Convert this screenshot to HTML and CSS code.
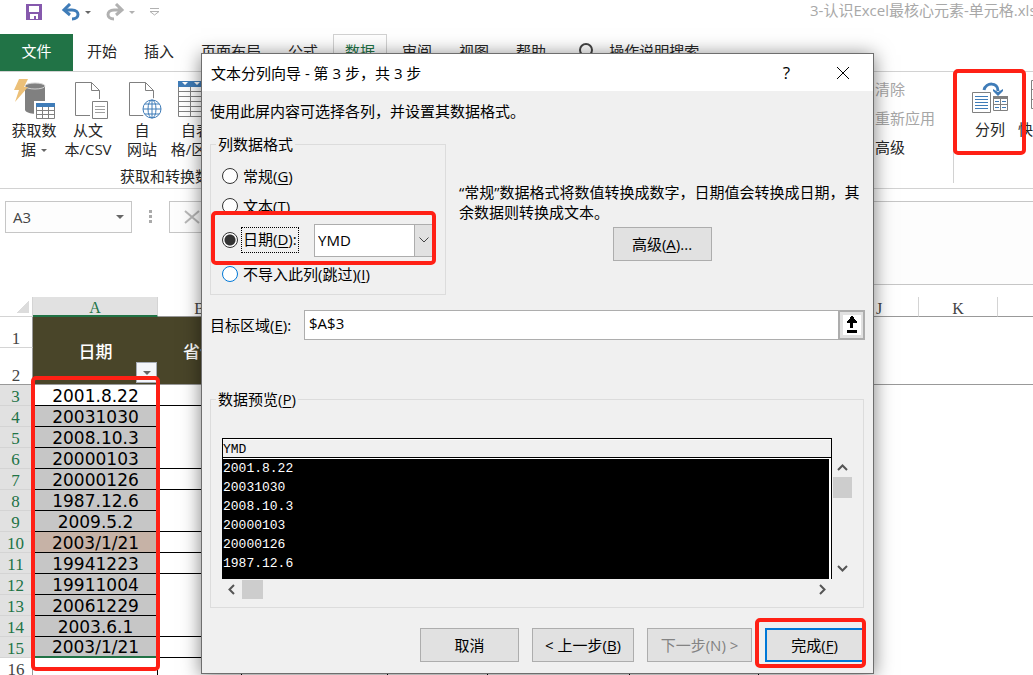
FILE: index.html
```html
<!DOCTYPE html>
<html lang="zh-CN">
<head>
    <meta charset="UTF-8">
    <meta name="viewport" content="width=device-width, initial-scale=1.0">
    <title>3-认识Excel最核心元素-单元格</title>
    <link rel="stylesheet" href="styles.css">
</head>
<body>
    <div class="excel">
        <header class="title-bar">
            <div class="quick-access">
                <button class="icon-btn" aria-label="保存">
                    <svg width="18" height="18" viewBox="0 0 18 18"><path fill="#8659ad" d="M1 1h16v16H1z"/><path fill="#fff" d="M4 3h10v6H4zM5 11h8v5h-2v-3H9v3H5z"/></svg>
                </button>
                <button class="icon-btn undo" aria-label="撤消">
                    <svg width="20" height="18" viewBox="0 0 20 18"><path fill="none" stroke="#3f7cb8" stroke-width="3" d="M3 7h8c8 0 8 9 0 9"/><path fill="none" stroke="#3f7cb8" stroke-width="3" d="M9 1L3 7l6 5"/></svg>
                    <span class="caret"></span>
                </button>
                <button class="icon-btn redo" aria-label="恢复">
                    <svg width="20" height="18" viewBox="0 0 20 18"><path fill="none" stroke="#b1b1b1" stroke-width="3" d="M17 7H9c-8 0-8 9 0 9M11 1l6 6-6 5"/></svg>
                    <span class="caret light"></span>
                </button>
                <button class="icon-btn" aria-label="自定义快速访问工具栏">
                    <svg width="11" height="8" viewBox="0 0 11 8"><path fill="none" stroke="#b1b1b1" d="M1 .5h9M1 3.500h9L5.500 7z"/></svg>
                </button>
            </div>
            <div class="doc-name">3-认识Excel最核心元素-单元格.xlsx</div>
        </header>

        <nav class="tabs">
            <a href="#" class="file-tab">文件</a>
            <a href="#">开始</a>
            <a href="#">插入</a>
            <a href="#">页面布局</a>
            <a href="#">公式</a>
            <a href="#" class="active">数据</a>
            <a href="#">审阅</a>
            <a href="#">视图</a>
            <a href="#">帮助</a>
            <a href="#" class="tell-me">
                <svg width="18" height="20" viewBox="0 0 18 20"><circle cx="9" cy="9" r="6" fill="none" stroke="#444" stroke-width="2"/><path stroke="#444" stroke-width="2" d="M6 14l-3 5"/></svg>
                操作说明搜索
            </a>
        </nav>

        <section class="ribbon">
            <div class="group get-data">
                <div class="tools">
                    <button class="tool">
                        <svg width="42" height="40" viewBox="0 0 42 40">
                            <path fill="#808080" d="M12 7v24c2 5 18 5 20 0V7z"/>
                            <ellipse cx="22" cy="7" rx="10" ry="3" fill="#808080" stroke="#d0d0d0"/>
                            <path fill="#ecc078" d="M6 0h9l-4 8h4L2 23l4-12H1z"/>
                            <path fill="#fff" d="M21 22h21v18H21z"/>
                            <path fill="#fff" stroke="#808080" d="M23.500 24.500h18v15h-18z"/>
                            <path fill="#3f7cb8" d="M23 24h19v4H23z"/>
                            <path stroke="#808080" d="M29.500 28v11M35.500 28v11M24 31.500h17M24 35.500h17"/>
                        </svg>
                        <span>获取数<br>据<i class="caret"></i></span>
                    </button>
                    <button class="tool">
                        <svg width="40" height="40" viewBox="-6 0 40 40">
                            <path fill="#fff" stroke="#808080" d="M1.500 3.500h16l8 8v25h-24zM17.500 3.500v8h8"/>
                            <path fill="#fff" d="M16 20h18v20H16z"/>
                            <path fill="#fff" stroke="#808080" d="M18.500 22.500h15v17h-15z"/>
                            <path stroke="#a0a0a0" d="M21 27.500h10M21 30.500h10M21 33.500h10"/>
                        </svg>
                        <span>从文<br>本/CSV</span>
                    </button>
                    <button class="tool">
                        <svg width="40" height="40" viewBox="-6 0 40 40">
                            <path fill="#fff" stroke="#808080" d="M1.500 3.500h16l8 8v25h-24zM17.500 3.500v8h8"/>
                            <circle cx="24" cy="30" r="11" fill="#fff"/>
                            <g fill="none" stroke="#3f7cb8"><circle cx="24" cy="30" r="9"/><ellipse cx="24" cy="30" rx="4" ry="9"/><path d="M15 30h18M24 21v18M17 25h14M17 35h14"/></g>
                        </svg>
                        <span>自<br>网站</span>
                    </button>
                    <button class="tool">
                        <svg width="36" height="40" viewBox="0 0 36 40">
                            <path fill="#fff" stroke="#808080" d="M.5 2.500h35v35H.5z"/>
                            <path fill="#3f7cb8" d="M0 2h36v6H0z"/>
                            <path fill="#fff" d="M4 3h6L7 6zM16 3h6l-3 3zM28 3h6l-3 3z"/>
                            <path stroke="#808080" d="M12.500 8v30M24.500 8v30M0 12.500h36M0 17.500h36M0 22.500h36M0 27.500h36M0 32.500h36"/>
                        </svg>
                        <span>自表<br>格/区域</span>
                    </button>
                </div>
                <div class="group-name">获取和转换数据</div>
            </div>
            <div class="group filter">
                <button disabled>清除</button>
                <button disabled>重新应用</button>
                <button>高级</button>
            </div>
            <div class="group data-tools">
                <button class="tool split">
                    <svg width="38" height="40" viewBox="0 0 38 40">
                        <path fill="#fff" stroke="#808080" d="M1.500 14.500h18v20h-18z"/>
                        <path stroke="#3f7cb8" d="M4 18.500h13M4 21.500h13M4 24.500h13M4 27.500h13M4 30.500h13"/>
                        <path fill="#fff" stroke="#808080" d="M22.500 18.500h14v14h-14z"/>
                        <path fill="#808080" d="M22 18h15v3H22z"/>
                        <path stroke="#808080" d="M29.500 20v12M22 26.500h14"/>
                        <path stroke="#3f7cb8" d="M24 23.500h4M31 23.500h4M24 29.500h4M31 29.500h4"/>
                        <path fill="none" stroke="#3f7cb8" stroke-width="3" d="M13 12c2-8 14-8 14 1"/>
                        <path fill="#3f7cb8" d="M22 11l5 3 5-3v2l-5 5-5-5z"/>
                    </svg>
                    <span>分列</span>
                    <span class="mark"></span>
                </button>
                <button class="tool flash">
                    <svg width="30" height="40" viewBox="0 0 30 40"><path fill="#fff" stroke="#808080" d="M.5 2.500h26v28H.5zM0 11.500h26M0 21.500h26"/></svg>
                    <span>快速</span>
                </button>
            </div>
        </section>

        <section class="formula-row">
            <button class="name-box">A3 <span class="caret"></span></button>
            <div class="dots"><i></i><i></i><i></i></div>
            <button class="cancel-entry" aria-label="取消输入">
                <svg width="16" height="14" viewBox="0 0 16 14"><path stroke="#b8b8b8" stroke-width="2" d="M1 1l14 12M15 1L1 13"/></svg>
            </button>
            <div class="formula-bar"></div>
        </section>

        <main class="sheet">
            <table class="grid">
                <colgroup>
                    <col class="c-head"><col class="c-a"><col class="c-b"><col class="c-c"><col class="c-d"><col class="c-e"><col class="c-f"><col class="c-s"><col class="c-s"><col class="c-s"><col class="c-j"><col class="c-j"><col>
                </colgroup>
                <thead>
                    <tr>
                        <th class="corner"><span></span></th>
                        <th class="selected">A</th><th>B</th><th>C</th><th>D</th><th>E</th><th>F</th><th>G</th><th>H</th><th>I</th><th>J</th><th>K</th><th></th>
                    </tr>
                </thead>
                <tbody>
                    <tr class="row-1">
                        <th>1</th>
                        <td class="field" rowspan="2">日期<button class="filter-btn" aria-label="筛选"><span class="caret"></span></button></td>
                        <td class="field" rowspan="2">省份</td>
                        <td class="field" rowspan="2" colspan="4"></td>
                        <td class="blank" rowspan="2" colspan="6"></td>
                    </tr>
                    <tr class="row-2"><th>2</th></tr>
                    <tr class="sel"><th>3</th><td class="current">2001.8.22</td><td class="line"></td></tr>
                    <tr class="sel"><th>4</th><td>20031030</td><td></td></tr>
                    <tr class="sel"><th>5</th><td>2008.10.3</td><td></td></tr>
                    <tr class="sel"><th>6</th><td>20000103</td><td class="line"></td></tr>
                    <tr class="sel"><th>7</th><td>20000126</td><td class="line"></td></tr>
                    <tr class="sel"><th>8</th><td>1987.12.6</td><td></td></tr>
                    <tr class="sel"><th>9</th><td>2009.5.2</td><td class="line"></td></tr>
                    <tr class="sel"><th>10</th><td class="tinted">2003/1/21</td><td class="line"></td></tr>
                    <tr class="sel"><th>11</th><td>19941223</td><td class="line"></td></tr>
                    <tr class="sel"><th>12</th><td>19911004</td><td></td></tr>
                    <tr class="sel"><th>13</th><td>20061229</td><td></td></tr>
                    <tr class="sel"><th>14</th><td>2003.6.1</td><td class="line"></td></tr>
                    <tr class="sel last"><th>15</th><td>2003/1/21</td><td class="line"></td></tr>
                    <tr class="row-16"><th>16</th><td></td><td></td><td></td><td></td><td></td><td></td></tr>
                </tbody>
            </table>
            <span class="mark"></span>
        </main>

        <form class="dialog" role="dialog" aria-labelledby="dialog-title">
            <div class="dialog-head">
                <h1 id="dialog-title">文本分列向导 - 第 3 步，共 3 步</h1>
                <button type="button" class="icon-btn help" aria-label="帮助">?</button>
                <button type="button" class="icon-btn" aria-label="关闭">
                    <svg width="14" height="14" viewBox="0 0 14 14"><path stroke="#000" d="M1 1l12 12M13 1L1 13"/></svg>
                </button>
            </div>

            <div class="dialog-body">
                <p class="intro">使用此屏内容可选择各列，并设置其数据格式。</p>

                <div class="format-row">
                    <fieldset class="formats">
                        <legend>列数据格式</legend>
                        <div class="option"><input type="radio" name="format" id="general"><label for="general">常规(<u>G</u>)</label></div>
                        <div class="option"><input type="radio" name="format" id="text"><label for="text">文本(<u>T</u>)</label></div>
                        <div class="option date">
                            <input type="radio" name="format" id="date" checked>
                            <label for="date">日期(<u>D</u>):</label>
                            <div class="order">
                                <select aria-label="日期格式"><option>YMD</option><option>MDY</option><option>DMY</option></select>
                                <span class="order-arrow"><svg width="10" height="6" viewBox="0 0 10 6"><path fill="none" stroke="#444" d="M.5 .5L5 5 9.500 .5"/></svg></span>
                            </div>
                            <span class="mark"></span>
                        </div>
                        <div class="option hot"><input type="radio" name="format" id="skip"><label for="skip">不导入此列(跳过)(<u>I</u>)</label></div>
                    </fieldset>
                    <div class="explain">
                        <p>“常规”数据格式将数值转换成数字，日期值会转换成日期，其余数据则转换成文本。</p>
                        <button type="button" class="btn">高级(<u>A</u>)...</button>
                    </div>
                </div>

                <div class="target">
                    <label for="target">目标区域(<u>E</u>):</label>
                    <input type="text" id="target" value="$A$3">
                    <button type="button" class="pick" aria-label="选择区域">
                        <svg width="18" height="20" viewBox="0 0 18 20"><path fill="#fff" d="M0 0h18v20H0z"/><path d="M8 1h2v1h1v2h1v1h1v1h1v2h-4v5H7V8H4V6h1V5h1V4h1V2h1zM4 15h10v3H4z"/></svg>
                    </button>
                </div>

                <fieldset class="preview">
                    <legend>数据预览(<u>P</u>)</legend>
                    <div class="preview-area">
                        <table>
                            <thead><tr><th>YMD</th></tr></thead>
                            <tbody>
                                <tr><td>2001.8.22</td></tr>
                                <tr><td>20031030</td></tr>
                                <tr><td>2008.10.3</td></tr>
                                <tr><td>20000103</td></tr>
                                <tr><td>20000126</td></tr>
                                <tr><td>1987.12.6</td></tr>
                            </tbody>
                        </table>
                        <div class="v-scroll">
                            <svg width="19" height="19" viewBox="0 0 19 19"><path fill="none" stroke="#555" stroke-width="2" d="M5 12l4.500-4.500L14 12"/></svg>
                            <i class="thumb"></i>
                            <svg class="end" width="19" height="19" viewBox="0 0 19 19"><path fill="none" stroke="#555" stroke-width="2" d="M5 6l4.500 4.500L14 6"/></svg>
                        </div>
                        <div class="h-scroll">
                            <svg width="19" height="19" viewBox="0 0 19 19"><path fill="none" stroke="#555" stroke-width="2" d="M12 5L7.500 9.500 12 14"/></svg>
                            <i class="thumb"></i>
                            <svg class="end" width="19" height="19" viewBox="0 0 19 19"><path fill="none" stroke="#555" stroke-width="2" d="M7 5l4.500 4.500L7 14"/></svg>
                        </div>
                    </div>
                </fieldset>

                <div class="actions">
                    <button type="button" class="btn">取消</button>
                    <button type="button" class="btn back">&lt; 上一步(<u>B</u>)</button>
                    <button type="button" class="btn next" disabled>下一步(N) &gt;</button>
                    <div class="finish">
                        <button type="submit" class="btn primary">完成(<u>F</u>)</button>
                        <span class="mark"></span>
                    </div>
                </div>
            </div>
        </form>
    </div>
</body>
</html>
```
FILE: styles.css
```css
* {
    box-sizing: border-box;
}

body {
    margin: 0;
    font-family: "Open Sans", "Noto Sans CJK SC", sans-serif;
    font-size: 15px;
    line-height: 20px;
    color: #262626;
    background-color: #fff;
}

button,
input,
select {
    font: inherit;
    color: inherit;
    margin: 0;
}

button {
    padding: 0;
    border: none;
    background: none;
    white-space: nowrap;
}

a {
    color: inherit;
    text-decoration: none;
}

svg {
    display: block;
    flex-shrink: 0;
}

u {
    text-underline-offset: 2px;
}

.excel {
    position: relative;
    height: 100vh;
    overflow: hidden;
}

.caret {
    display: inline-block;
    border: 4px solid transparent;
    border-top-color: #666;
    border-bottom: none;
}

.caret.light {
    border-top-color: #b1b1b1;
}

/* red highlight frame, laid over the control it belongs to */
.mark {
    position: absolute;
    border: 4px solid #ff2015;
    border-radius: 5px;
    pointer-events: none;
    z-index: 2;
}

/* title bar */
.title-bar {
    display: flex;
    justify-content: space-between;
    height: 34px;
    overflow: hidden;
}

.quick-access {
    display: flex;
    align-items: center;
    gap: 14px;
    height: 24px;
    padding-left: 25px;
}

.icon-btn {
    display: flex;
    align-items: center;
    gap: 4px;
}

.undo {
    margin-left: 4px;
}

.quick-access .caret {
    border-width: 3px;
    border-bottom: none;
}

.doc-name {
    width: 223px;
    white-space: nowrap;
    color: #a8a8a8;
}

/* tabs */
.tabs {
    display: flex;
    gap: 3px;
    height: 38px;
    border-bottom: 1px solid #d2d2d2;
}

.tabs a {
    display: flex;
    align-items: center;
    padding: 0 11px 4px;
    border: 1px solid transparent;
    border-bottom: none;
    white-space: nowrap;
}

.tabs .file-tab {
    justify-content: center;
    width: 73px;
    margin-right: -1px;
    color: #fff;
    background-color: #217346;
}

.tabs .active {
    color: #217346;
    border-color: #d2d2d2;
}

.tabs .tell-me {
    gap: 14px;
    padding-left: 15px;
}

/* ribbon */
.ribbon {
    display: flex;
    height: 117px;
    border-bottom: 1px solid #d2d2d2;
}

.group {
    padding-top: 7px;
    white-space: nowrap;
}

.get-data {
    flex: 1;
    padding-left: 7px;
}

.tools {
    display: flex;
}

.tool {
    position: relative;
    display: flex;
    flex-direction: column;
    align-items: center;
    width: 54px;
    line-height: 19px;
}

.tool span {
    padding-top: 2px;
}

.tool .caret {
    margin: 0 0 3px 5px;
    border-width: 3px;
    border-bottom: none;
}

.group-name {
    width: 331px;
    padding-top: 7px;
    text-align: center;
}

.filter {
    display: flex;
    flex-direction: column;
    align-items: flex-start;
    width: 78px;
    padding-top: 2px;
}

.filter button {
    height: 29px;
}

button:disabled {
    color: #a6a6a6;
}

.data-tools {
    display: flex;
    gap: 3px;
    width: 80px;
    height: 111px;
    padding-top: 6px;
    border-left: 1px solid #d2d2d2;
}

.data-tools .split {
    flex-shrink: 0;
    width: 72px;
    height: 70px;
}

.split .mark {
    top: -9px;
    left: -1px;
    width: 73px;
    height: 86px;
    padding: 0;
}

.flash {
    flex-shrink: 0;
    width: 30px;
    margin-left: -11px;
}

.flash svg {
    margin-left: 26px;
}

/* name box and formula bar */
.formula-row {
    display: flex;
    align-items: flex-start;
    height: 108px;
    padding: 12px 0 0 5px;
}

.name-box {
    display: flex;
    align-items: center;
    justify-content: space-between;
    width: 127px;
    height: 32px;
    padding: 0 7px;
    color: #444;
    border: 1px solid #c6c6c6;
    background-color: #fdfdfd;
}

.dots {
    display: flex;
    flex-direction: column;
    gap: 2px;
    padding: 9px 17px 0;
}

.dots i {
    width: 3px;
    height: 3px;
    background-color: #aaa;
}

.cancel-entry {
    width: 90px;
    height: 32px;
    padding-left: 14px;
    border: 1px solid #c6c6c6;
    background-color: #fdfdfd;
}

.formula-bar {
    flex: 1;
    height: 84px;
    margin-left: 6px;
    border: 1px solid #c6c6c6;
    border-right: none;
    background-color: #fdfdfd;
}

/* worksheet */
.sheet {
    position: relative;
}

.sheet .mark {
    top: 79px;
    left: 31px;
    width: 129px;
    height: 295px;
}

.grid {
    width: 100%;
    table-layout: fixed;
    border-collapse: separate;
    border-spacing: 0;
}

.c-head { width: 33px; }
.c-a { width: 125px; }
.c-b { width: 84px; }
.c-c { width: 146px; }
.c-d { width: 100px; }
.c-e { width: 142px; }
.c-f { width: 129px; }
.c-s { width: 27px; }
.c-j { width: 79px; }

.grid th {
    padding: 0;
    font-family: "Liberation Serif", serif;
    font-size: 17px;
    font-weight: normal;
    color: #444;
    vertical-align: bottom;
    border-right: 1px solid #d4d4d4;
}

.grid thead th {
    height: 20px;
    font-size: 16px;
    line-height: 15px;
    border-bottom: 1px solid #999;
}

.grid thead th:last-child {
    border-right: none;
}

.grid .corner span {
    display: block;
    width: 12px;
    height: 12px;
    margin: 0 0 3px 17px;
    background: linear-gradient(135deg, transparent 50%, #dcdcdc 50%);
}

.grid thead .corner {
    border-bottom-color: #d4d4d4;
}

.grid thead .selected {
    color: #217346;
    background-color: #e1e1e1;
    border-bottom: 2px solid #217346;
}

.grid tbody th {
    line-height: 16px;
    border-right-color: #999;
    border-bottom: 1px solid #d4d4d4;
}

.grid .row-1 th { height: 31px; }

.grid .row-2 th {
    height: 37px;
    border-bottom-color: #999;
}

.grid td {
    padding: 0;
    text-align: center;
}

.grid .field {
    position: relative;
    font-family: "Noto Sans CJK SC", sans-serif;
    font-size: 17px;
    font-weight: 500;
    color: #fff;
    background-color: #494529;
    border-bottom: 1px solid #999;
}

.grid .blank {
    border-bottom: 1px solid #999;
}

.filter-btn {
    position: absolute;
    right: 1px;
    bottom: 1px;
    display: flex;
    align-items: center;
    justify-content: center;
    width: 21px;
    height: 21px;
    border: 1px solid #a5abb5;
    background-color: #f4f6fa;
}

.sel td,
.sel th,
.row-16 th {
    height: 21px;
}

.grid .sel th {
    color: #217346;
    background-color: #e1e1e1;
    border-right: 2px solid #217346;
}

.sel td:nth-child(2) {
    padding-top: 2px;
    font-family: "DejaVu Sans", sans-serif;
    font-size: 17px;
    line-height: 18px;
    color: #000;
    background-color: #c6c6c6;
    border-bottom: 1px solid #000;
}

.sel td.current {
    background-color: #fff;
}

.sel td.tinted {
    background-color: #c6b2a6;
}

.sel.last td:nth-child(2) {
    line-height: 17px;
    border-bottom: 2px solid #217346;
}

.sel .line {
    border-bottom: 1px solid #000;
}

.row-16 td {
    border-right: 1px solid #000;
}

/* wizard dialog */
.dialog {
    position: absolute;
    top: 53px;
    left: 201px;
    right: 159px;
    color: #000;
    background-color: #f0f0f0;
    border: 1px solid #6e6e6e;
    box-shadow: 0 2px 18px rgba(0, 0, 0, 0.5);
}

.dialog-head {
    display: flex;
    align-items: center;
    height: 37px;
    padding: 0 23px 0 9px;
    background-color: #fff;
}

.dialog-head h1 {
    flex: 1;
    margin: 0;
    font-size: 15px;
    font-weight: normal;
}

.dialog-head .help {
    margin-right: 46px;
    font-size: 17px;
}

.dialog-body {
    padding: 10px 8px 11px;
}

.dialog p {
    margin: 0;
}

.intro {
    padding-bottom: 13px;
}

fieldset {
    min-width: 0;
    margin: 0;
    border: 1px solid #dcdcdc;
}

legend {
    height: 20px;
    padding: 0 2px;
}

.format-row {
    display: flex;
    gap: 13px;
}

.formats {
    width: 236px;
    padding: 7px 5px 5px;
}

.option {
    position: relative;
    display: flex;
    align-items: center;
    gap: 4px;
    height: 30px;
    padding-left: 6px;
}

.option input {
    appearance: none;
    width: 16px;
    height: 16px;
    border: 1px solid #333;
    border-radius: 50%;
    background-color: #fff;
}

.option input:checked {
    background: radial-gradient(circle, #333 5px, #fff 6px);
}

.option.hot input {
    border-color: #0078d7;
}

.option label {
    padding: 0 1px;
}

.option.date {
    height: 38px;
}

.date label {
    height: 24px;
    line-height: 22px;
    outline: 1px dotted #000;
}

.order {
    display: grid;
    grid-template-columns: 1fr 20px;
    position: absolute;
    left: 98px;
    width: 120px;
    height: 33px;
}

.order select {
    grid-area: 1 / 1 / 2 / 3;
    appearance: none;
    padding: 0 3px;
    border: 1px solid #adadad;
    border-radius: 0;
    background-color: #fff;
}

.order-arrow {
    grid-area: 1 / 2;
    display: flex;
    align-items: center;
    justify-content: center;
    border: 1px solid #adadad;
    background-color: #e1e1e1;
    pointer-events: none;
}

.date .mark {
    top: -10px;
    left: -5px;
    width: 225px;
    height: 54px;
}

.explain {
    flex: 1;
    padding-top: 48px;
}

.explain .btn {
    display: block;
    margin: 5px auto 0;
}

.btn {
    width: 99px;
    height: 34px;
    padding-bottom: 1px;
    border: 1px solid #adadad;
    background-color: #e1e1e1;
}

.target {
    display: flex;
    align-items: center;
    height: 30px;
    margin: 15px 0 49px;
}

.target label {
    width: 94px;
}

.target input {
    flex: 1;
    min-width: 0;
    height: 30px;
    padding: 0 4px 4px;
    border: 1px solid #adadad;
    background-color: #fff;
}

.pick {
    display: flex;
    align-items: center;
    justify-content: center;
    width: 27px;
    height: 30px;
    margin-left: -1px;
    border: 2px solid #adadad;
    background-color: #e1e1e1;
}

.preview {
    padding: 29px 11px 8px;
    margin-right: 1px;
}

.preview legend {
    margin-left: -6px;
}

.preview-area {
    display: grid;
    grid-template-columns: 1fr 20px;
}

.preview table {
    border: 1px solid #000;
    border-bottom: none;
    border-spacing: 0;
    font-family: "Liberation Mono", monospace;
    font-size: 13px;
    line-height: 19px;
}

.preview th {
    height: 19px;
    padding: 2px 0 0;
    font-weight: normal;
    line-height: 15px;
    text-align: left;
    border-top: 1px solid #fff;
    border-bottom: 1px solid #000;
}

.preview tbody {
    color: #fff;
    background-color: #000;
}

.preview td {
    height: 19px;
    padding: 0;
    border-right: 2px solid #fff;
}

.preview tr:first-child td {
    height: 20px;
    border-top: 1px solid #fff;
}

.preview tr:last-child td {
    height: 25px;
    padding-bottom: 6px;
}

.v-scroll {
    display: flex;
    flex-direction: column;
    padding: 20px 0 0 1px;
}

.h-scroll {
    display: flex;
    padding-top: 1px;
}

.thumb {
    width: 19px;
    height: 21px;
    background-color: #cdcdcd;
}

.h-scroll .thumb {
    width: 21px;
    height: 19px;
    margin-left: 1px;
}

.v-scroll .end {
    margin-top: auto;
}

.h-scroll .end {
    margin-left: auto;
}

.actions {
    display: flex;
    justify-content: flex-end;
    gap: 13px;
    padding: 20px 1px 0 0;
}

.actions .back {
    width: 102px;
}

.actions .next {
    width: 105px;
    color: #838383;
}

.finish {
    position: relative;
}

.primary {
    border: 2px solid #0078d7;
}

.finish .mark {
    top: -10px;
    left: -10px;
    width: 111px;
    height: 50px;
}
```
